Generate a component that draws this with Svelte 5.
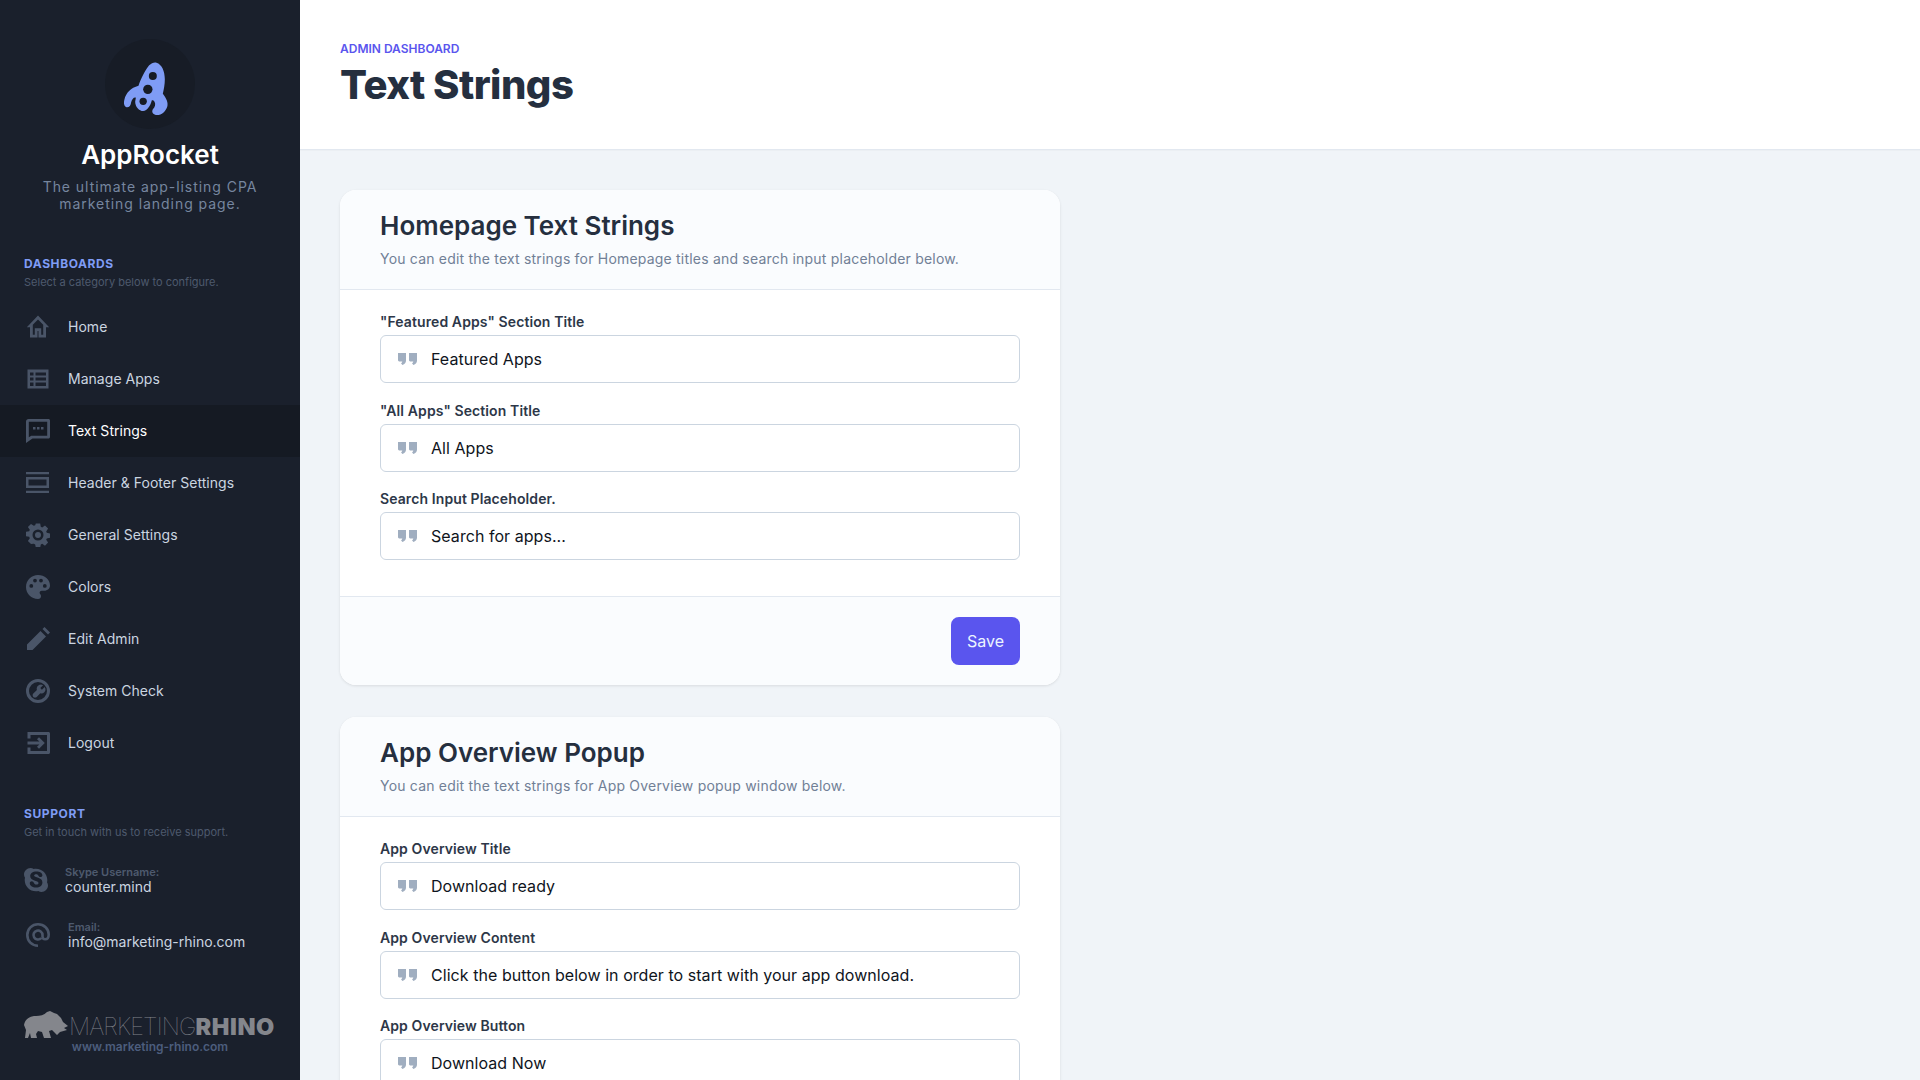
<script>
  const nav = [
    { label: 'Home', icon: 'home' },
    { label: 'Manage Apps', icon: 'table' },
    { label: 'Text Strings', icon: 'chat', active: true },
    { label: 'Header & Footer Settings', icon: 'layout' },
    { label: 'General Settings', icon: 'gear' },
    { label: 'Colors', icon: 'palette' },
    { label: 'Edit Admin', icon: 'pencil' },
    { label: 'System Check', icon: 'wrench' },
    { label: 'Logout', icon: 'logout' }
  ];
  const cards = [
    {
      title: 'Homepage Text Strings',
      sub: 'You can edit the text strings for Homepage titles and search input placeholder below.',
      fields: [
        ['"Featured Apps" Section Title', 'Featured Apps'],
        ['"All Apps" Section Title', 'All Apps'],
        ['Search Input Placeholder.', 'Search for apps...']
      ],
      save: true
    },
    {
      title: 'App Overview Popup',
      sub: 'You can edit the text strings for App Overview popup window below.',
      fields: [
        ['App Overview Title', 'Download ready'],
        ['App Overview Content', 'Click the button below in order to start with your app download.'],
        ['App Overview Button', 'Download Now']
      ],
      save: false
    }
  ];
</script>

<div class="layout">
  <aside class="sidebar">
    <div class="brand">
      <div class="avatar">
        <svg viewBox="340 120 140 165" width="47" height="55" aria-hidden="true">
          <path fill="#7f9cf5" d="M440 125C456 130 465 150 465 175C465 190 462 205 459 218C470 232 476 245 472 258C467 272 454 284 438 282C428 280 425 272 429 265C436 258 438 248 434 242C431 238 429 237 426 238C422 254 412 270 400 270C388 270 376 257 376 242L378 230C372 228 366 235 364 244C363 254 358 260 350 259C342 256 341 245 344 235C348 216 363 200 386 194C393 173 406 148 418 133C425 126 433 123 440 125Z"/>
          <circle cx="429" cy="165" r="12" fill="#171c26"/>
          <circle cx="414" cy="205" r="14" fill="#171c26"/>
          <circle cx="400" cy="241" r="11" fill="#171c26"/>
        </svg>
      </div>
      <h2>AppRocket</h2>
      <p>The ultimate app-listing CPA marketing landing page.</p>
    </div>

    <div class="sec-head dash">
      <h6>DASHBOARDS</h6>
      <small>Select a category below to configure.</small>
    </div>

    <nav>
      {#each nav as item}
        <a href="#top" class="nav-item" class:active={item.active}>
          <svg class="nav-icon" viewBox="0 0 24 24" aria-hidden="true">
            {#if item.icon === 'home'}
              <path d="M12 .5.8 12.200H4v10.300h7.500V16h1v6.500H20V12.200h3.200L12 .5Zm5.200 19.300h-2V13.200H8.800v6.600h-2V9.700L12 4.400l5.200 5.300v10.100Z"/>
            {:else if item.icon === 'table'}
              <path fill-rule="evenodd" d="M1.500 2.500h21v19h-21v-19Zm2.500 3v3h3.500v-3H4Zm5.500 0v3h10.500v-3H9.500ZM4 10.500v3h3.500v-3H4Zm5.500 0v3h10.500v-3H9.500ZM4 15.500v3.500h3.500v-3.500H4Zm5.500 0v3.500h10.500v-3.500H9.500Z"/>
            {:else if item.icon === 'chat'}
              <path fill-rule="evenodd" d="M2.500 0h20C23.300 0 24 .7 24 1.500v16.500c0 .8-.7 1.500-1.500 1.500H6.500L0 24V2.500C0 1.100 1.100 0 2.500 0Zm.3 2.800v15.500l2.500-1.600h15.900V2.800H2.800Z"/>
              <rect x="7" y="8" width="2.500" height="2.500"/><rect x="11" y="8" width="2.500" height="2.500"/><rect x="15" y="8" width="2.500" height="2.500"/>
            {:else if item.icon === 'layout'}
              <path fill-rule="evenodd" d="M0 1h23v2.200H0V1Zm0 18.800h23V22H0v-2.200ZM0 6h23v11H0V6Zm2.500 2.500v6h18v-6h-18Z"/>
            {:else if item.icon === 'gear'}
              <path fill-rule="evenodd" d="M9.800.5h4.400l.6 3.300 1.400.6 2.800-1.900 3.100 3.100-1.900 2.800.6 1.400 3.300.6v4.400l-3.300.6-.6 1.400 1.900 2.800-3.100 3.100-2.800-1.900-1.400.6-.6 3.300H9.800l-.6-3.300-1.400-.6L5 21.100 1.900 18l1.900-2.800-.6-1.400-3.300-.6V8.800l3.300-.6.6-1.400L1.900 4 5 .9l2.800 1.900 1.400-.6L9.800.5ZM12 6.500a5.500 5.500 0 1 0 0 11 5.500 5.500 0 0 0 0-11Zm0 2.500a3 3 0 1 1 0 6 3 3 0 0 1 0-6Z"/>
            {:else if item.icon === 'palette'}
              <path fill-rule="evenodd" d="M12 0C5.400 0 0 5.300 0 12s5.400 12 12 12c1.900 0 3-1.300 3-2.800 0-.8-.3-1.400-.7-1.900-.4-.4-.7-1-.7-1.500 0-1.200 1-2 2.100-2H18c3.700 0 6-2.500 6-5.300C24 4.600 18.600 0 12 0ZM5.300 12.800a1.900 1.900 0 1 1 0-3.800 1.900 1.900 0 0 1 0 3.800ZM9 7.500a1.900 1.900 0 1 1 0-3.800 1.900 1.900 0 0 1 0 3.800Zm6 0a1.900 1.900 0 1 1 0-3.800 1.900 1.900 0 0 1 0 3.800Zm3.800 5.300a1.900 1.900 0 1 1 0-3.800 1.900 1.900 0 0 1 0 3.800Z"/>
            {:else if item.icon === 'pencil'}
              <path d="M1 23v-5.500L14.500 4l5.500 5.500L6.500 23H1ZM16.500 2 18.500 0l5.500 5.500-2 2L16.500 2Z"/>
            {:else if item.icon === 'wrench'}
              <path fill-rule="evenodd" d="M12 0a12 12 0 1 1 0 24 12 12 0 0 1 0-24Zm0 3a9 9 0 1 0 0 18 9 9 0 0 0 0-18Zm2.500 2.500c1 0 1.800.3 2.600.8l-2.800 2.800 1.600 1.600 2.800-2.800c.5.800.8 1.600.8 2.600 0 2.700-2.600 4.600-5.200 3.800l-2.600 2.600-1 1c-.9.900-2.500.900-3.400 0s-.9-2.500 0-3.400l3.600-3.600c-.8-2.600 1.100-5.200 3.600-5.200Z"/>
            {:else if item.icon === 'logout'}
              <path fill-rule="evenodd" d="M1.500 1h21c.8 0 1.500.7 1.500 1.500v19c0 .8-.7 1.500-1.500 1.500h-21V16.500H4.500V20h16.500V4H4.500v3.500H1.500V1ZM13 6.200 18.800 12 13 17.800l-2-2 2.400-2.400H1.500v-2.800h11.900L11 8.200l2-2Z"/>
            {/if}
          </svg>
          <span>{item.label}</span>
        </a>
      {/each}
    </nav>

    <div class="sec-head support">
      <h6>SUPPORT</h6>
      <small>Get in touch with us to receive support.</small>
    </div>

    <div class="contact skype">
      <svg class="c-icon" viewBox="0 0 24 24" aria-hidden="true">
        <path d="M23 14.300c.2-.8.300-1.500.3-2.300C23.300 5.700 18.300.7 12 .7c-.8 0-1.500.1-2.300.3C8.700.4 7.600 0 6.500 0 3 0 0 3 0 6.500c0 1.100.4 2.300 1 3.200-.2.800-.3 1.500-.3 2.300 0 6.300 5 11.300 11.300 11.300.8 0 1.500-.1 2.300-.3 1 .6 2.100 1 3.200 1 3.500 0 6.500-3 6.500-6.500 0-1.100-.4-2.300-1-3.200Zm-10.800 5.200c-4 0-6.400-2-6.400-4.300 0-1.200.9-1.900 2-1.900 2.400 0 1.800 3.300 4.400 3.300 1.400 0 2.300-.7 2.300-1.600 0-2.700-8.300-1.500-8.300-6.900 0-2.600 2.300-4.600 6.200-4.600 3.300 0 6 1.500 6 3.700 0 1.100-.8 1.900-1.900 1.900-2.200 0-1.700-2.900-4.300-2.900-1.300 0-2.100.6-2.100 1.400 0 2.400 8.300 1.300 8.300 6.900 0 3-2.700 5-6.200 5Z"/>
      </svg>
      <div><small>Skype Username:</small><span>counter.mind</span></div>
    </div>
    <div class="contact email">
      <svg class="c-icon at" viewBox="0 0 24 24" aria-hidden="true">
        <path fill="none" d="M12 22.700C5.800 22.700 1.300 18 1.300 12S6 1.300 12 1.300 22.700 5.800 22.700 11.500c0 3-1.500 4.800-3.500 4.800-1.700 0-2.700-1-2.700-2.800V12a4.500 4.500 0 1 0-1.300 3.200"/>
      </svg>
      <div><small>Email:</small><span>info@marketing-rhino.com</span></div>
    </div>

    <div class="logo">
      <div class="logo-row">
        <svg class="rhino" viewBox="0 0 46 27" width="46" height="27" aria-hidden="true">
          <path fill="#84868c" d="M0 14C1 8 6 5 12 5C16 5 20 4 23 1L26 0L30 2L33 3L37 7L39 11L44 15L40 17L43 19L36 21L33 24L30 21L28 19L25 20L27 27L20 27L18 21L14 20L12 23L13 27L7 27L6 22L4 27L1 27L2 19Z"/>
        </svg>
        <span class="thin">MARKETING</span><span class="bold">RHINO</span>
      </div>
      <div class="logo-url">www.marketing-rhino.com</div>
    </div>
  </aside>

  <main>
    <header>
      <h6>ADMIN DASHBOARD</h6>
      <h1>Text Strings</h1>
    </header>
    <div class="content">
      {#each cards as card}
        <section class="card">
          <div class="card-head">
            <h3>{card.title}</h3>
            <p>{card.sub}</p>
          </div>
          <div class="card-body">
            {#each card.fields as f}
              <div class="field">
                <span class="field-label">{f[0]}</span>
                <div class="input">
                  <svg viewBox="0 0 19 12" width="19" height="12" aria-hidden="true">
                    <path fill="#a0aec0" d="M0 0h8v7.500c0 2-1.200 3.500-3.600 4.500L3 10.300c.8-.4 1.200-.9 1.300-1.800H1L0 7.500V0Zm11 0h8v7.500c0 2-1.200 3.500-3.600 4.500L14 10.300c.8-.4 1.200-.9 1.300-1.800H12l-1-1V0Z"/>
                  </svg>
                  <span>{f[1]}</span>
                </div>
              </div>
            {/each}
          </div>
          {#if card.save}
            <div class="card-foot"><button type="button">Save</button></div>
          {/if}
        </section>
      {/each}
    </div>
  </main>
</div>

<style>
  :global(body) { margin: 0; font-family: Inter, "Liberation Sans", sans-serif; }
  .layout { display: flex; height: 1080px; overflow: hidden; background: #f0f4f8; }
  .sidebar { width: 300px; flex: none; background: #1a202c; color: #cbd5e0; box-sizing: border-box; display: flex; flex-direction: column; }
  .brand { padding: 39px 20px 0; text-align: center; }
  .avatar { width: 90px; height: 90px; margin: 0 auto; border-radius: 50%; background: #171c26; display: flex; align-items: center; justify-content: center; }
  .avatar svg { display: block; margin: 8px 0 0 -8px; }
  .brand h2 { margin: 6px 0 0; font-size: 26px; line-height: 40px; font-weight: 600; color: #fff; }
  .brand p { margin: 4px 0 0; font-size: 14px; line-height: 16.800px; letter-spacing: 0.95px; color: #76869f; }
  .sec-head { padding: 0 24px; }
  .sec-head h6 { margin: 0; font-size: 12px; line-height: 16px; font-weight: 700; letter-spacing: 0.05em; color: #7f9cf5; }
  .sec-head small { display: block; margin-top: 2px; font-size: 11px; line-height: 16px; color: #4e5a6e; }
  .dash { margin-top: 43px; }
  nav { margin-top: 11px; display: flex; flex-direction: column; }
  .nav-item { height: 52px; display: flex; align-items: center; padding-left: 26px; gap: 18px; font-size: 14px; letter-spacing: 0.03px; color: #cbd5e0; text-decoration: none; }
  .nav-item.active { background: #151a23; color: #fff; }
  .nav-icon { width: 24px; height: 24px; fill: #4a5568; flex: none; }
  .support { margin-top: 37px; }
  .contact { display: flex; align-items: flex-start; padding-left: 24px; }
  .contact small { display: block; font-size: 11px; line-height: 13px; font-weight: 600; color: #4e5a6e; }
  .contact span { display: block; font-size: 14px; line-height: 16px; color: #cbd5e0; }
  .c-icon { width: 24px; height: 24px; margin-top: 2px; fill: #4a5568; stroke: #4a5568; stroke-width: 0; flex: none; }
  .c-icon.at { stroke-width: 2.600; }
  .skype { margin-top: 26px; gap: 17px; }
  .email { margin-top: 26px; padding-left: 26px; gap: 18px; }
  .logo { margin-top: 61px; padding-left: 24px; }
  .logo-row { display: flex; align-items: flex-end; height: 27px; color: #84868c; }
  .rhino { flex: none; }
  .thin { font-size: 23.500px; line-height: 24px; font-weight: 100; letter-spacing: -0.850px; margin-bottom: -1px; margin-left: -1px; }
  .bold { font-size: 23.500px; line-height: 24px; font-weight: 900; letter-spacing: 0.600px; margin-bottom: -1px; }
  .logo-url { width: 252px; text-align: center; font-size: 12px; line-height: 16px; font-weight: 600; color: #4c5d7d; margin-top: 1px; }

  main { flex: 1; min-width: 0; }
  header { height: 150px; box-sizing: border-box; background: #fff; border-bottom: 1px solid #e2e8f0; padding: 41px 40px 0; box-shadow: 0 1px 1px rgba(0, 0, 0, 0.02); }
  header h6 { margin: 0; font-size: 12px; line-height: 16px; font-weight: 600; color: #5a55ee; }
  header h1 { margin: 4px 0 0; font-size: 40px; line-height: 48px; font-weight: 800; letter-spacing: -0.5px; color: #252f3f; }
  .content { padding: 40px; }
  .card { width: 720px; background: #fff; border-radius: 16px; box-shadow: 0 1px 3px rgba(0, 0, 0, 0.1); margin-bottom: 32px; overflow: hidden; }
  .card-head { background: #fafcfe; border-bottom: 1px solid #e2e8f0; padding: 20px 40px 0; height: 100px; box-sizing: border-box; }
  .card-head h3 { margin: 0; font-size: 26px; line-height: 32px; font-weight: 600; color: #252f3f; }
  .card-head p { margin: 7px 0 0; font-size: 14px; line-height: 20px; letter-spacing: 0.2px; color: #718096; }
  .card-body { padding: 24px 40px 36px; }
  .field + .field { margin-top: 19.500px; }
  .field-label { display: block; font-size: 14px; line-height: 16px; font-weight: 600; letter-spacing: 0.1px; color: #2d3748; margin-bottom: 5px; }
  .input { height: 48px; box-sizing: border-box; border: 1px solid #cbd5e0; border-radius: 6px; background: #fff; display: flex; align-items: center; padding-left: 17px; gap: 14px; font-size: 16px; letter-spacing: 0.05px; color: #0f141c; }
  .card-foot { background: #fafcfe; border-top: 1px solid #e2e8f0; padding: 20px 40px; display: flex; justify-content: flex-end; }
  button { height: 48px; width: 69px; border: 0; border-radius: 8px; background: #5a55ee; color: #ebf4ff; font: 400 16px Inter, sans-serif; }
</style>
